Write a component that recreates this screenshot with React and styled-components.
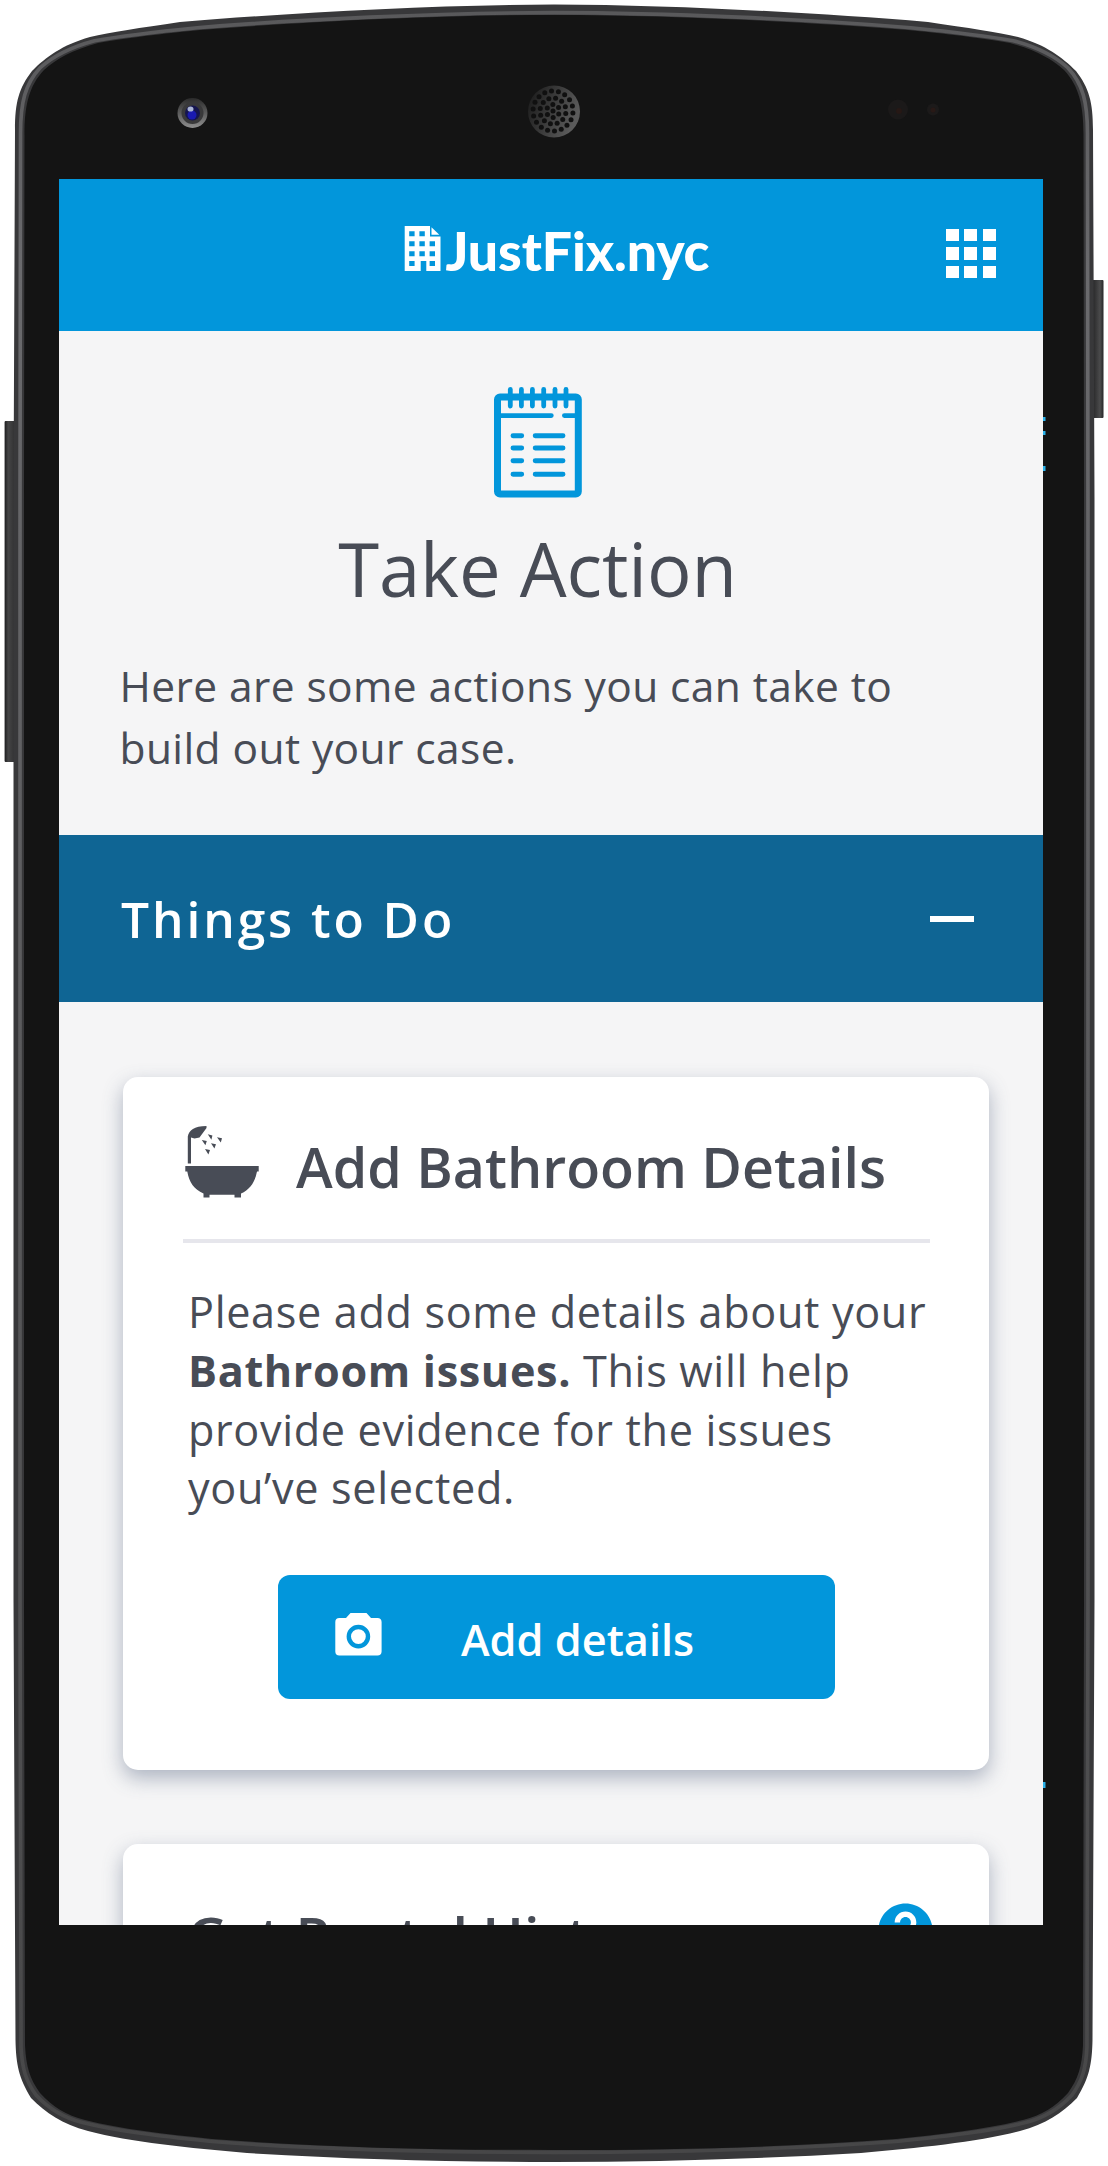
import React from "react";
import styled, { createGlobalStyle } from "styled-components";
import { MdHelp } from "react-icons/md";

const blue = "#0296db";
const ink = "#484c56";

const GlobalStyle = createGlobalStyle`
  * { box-sizing: border-box; }
  body {
    margin: 0;
    background: #fff;
    color: ${ink};
    font-family: "Open Sans", "Noto Sans", sans-serif;
  }
  h1, h2, h3, p { margin: 0; font-weight: 400; }
`;

const Phone = styled.div`
  position: relative;
  width: 1108px;
  height: 2166px;
  padding: 179px 65px 241px 59px;
  overflow: hidden;
`;

const Shell = styled.svg`
  position: absolute;
  inset: 0;
`;

const Screen = styled.main`
  position: relative;
  height: 1746px;
  overflow: hidden;
  background: #f5f5f6;
`;

const TopBar = styled.header`
  display: grid;
  grid-template-columns: 1fr auto 1fr;
  align-items: start;
  height: 152px;
  padding: 47px 47px 0 58px;
  background: ${blue};
`;

const Brand = styled.div`
  grid-column: 2;
  display: flex;
  align-items: flex-start;
  gap: 5px;
  color: #fff;
`;

const BrandName = styled.span`
  font-family: Lato, "Open Sans", sans-serif;
  font-weight: 900;
  font-size: 53.5px;
  line-height: 64px;
  margin-top: -8px;
  letter-spacing: -0.1px;
  white-space: nowrap;
`;

const MenuGrid = styled.button`
  justify-self: end;
  display: grid;
  grid-template-columns: repeat(3, 13px);
  grid-auto-rows: 12.4px;
  gap: 6px 5.7px;
  margin-top: 3px;
  padding: 0;
  border: 0;
  background: none;
`;

const MenuDot = styled.span`
  background: #fff;
`;

const Intro = styled.section`
  display: flex;
  flex-direction: column;
  align-items: center;
  height: 504px;
  padding: 55px 90px 0 63px;
`;

const Title = styled.h1`
  margin-top: 26px;
  font-size: 74.2px;
  line-height: 90px;
  letter-spacing: -0.1px;
  white-space: nowrap;
`;

const Lead = styled.p`
  align-self: stretch;
  margin: 41px 0 0 -2.5px;
  font-size: 42.5px;
  line-height: 62px;
  letter-spacing: 0.4px;
  white-space: nowrap;
`;

const SectionBar = styled.div`
  display: flex;
  align-items: center;
  justify-content: space-between;
  height: 167px;
  padding: 0 69px 0 62px;
  background: #0f6594;
  color: #fff;
`;

const SectionTitle = styled.h2`
  font-size: 49.7px;
  font-weight: 600;
  line-height: 68px;
  letter-spacing: 2.9px;
`;

const Minus = styled.span`
  width: 44px;
  height: 6px;
  background: #fff;
`;

const CardList = styled.div`
  display: flex;
  flex-direction: column;
  gap: 74px;
  padding: 75px 54px 0 64px;
`;

const Card = styled.article`
  flex: none;
  height: 693px;
  padding: 49px 59px 0 60px;
  border-radius: 15px;
  background: #fff;
  box-shadow: 0 8px 20px rgba(72, 88, 120, 0.42);
`;

const CardHead = styled.div`
  display: flex;
  align-items: flex-start;
  justify-content: ${(p) => (p.$spread ? "space-between" : "flex-start")};
  gap: 36px;
  height: ${(p) => (p.$ruled ? 117 : 90)}px;
  padding: ${(p) => (p.$spread ? "3px 0 0 4px" : "0 0 0 2px")};
  border-bottom: ${(p) => (p.$ruled ? "4px solid #e6e6ec" : "0")};
`;

const CardTitle = styled.h3`
  margin-top: 3px;
  font-size: 55.5px;
  font-weight: 600;
  line-height: 76px;
  white-space: nowrap;
`;

const CardText = styled.p`
  margin-top: 40px;
  padding-left: 5px;
  font-size: 43.2px;
  line-height: 58.8px;
  letter-spacing: 0.65px;
  white-space: nowrap;
`;

const ActionButton = styled.button`
  display: flex;
  align-items: center;
  gap: 79px;
  width: 557px;
  height: 124px;
  margin: 57px 0 0 95px;
  padding: 0 0 0 57px;
  border: 0;
  border-radius: 12px;
  background: ${blue};
  color: #fff;
  font: 600 43.3px/60px "Open Sans", "Noto Sans", sans-serif;
`;

const ButtonLabel = styled.span`
  margin-top: 5px;
  white-space: nowrap;
`;

const CameraMark = styled.svg`
  margin-top: -5px;
`;

const HelpIcon = styled(MdHelp)`
  width: 65px;
  height: 65px;
  margin: 2px -8px 0 0;
  color: ${blue};
`;

const speakerHoles = [
  [0, 0, 1],
  [6.5, 0.5, 6],
  [13, 0.2, 12],
  [20, 0.1, 18],
].flatMap(([radius, phase, count]) =>
  Array.from({ length: count }, (_, i) => {
    const angle = phase + (i * 2 * Math.PI) / count;
    return [radius * Math.cos(angle), radius * Math.sin(angle)];
  })
);

const outer =
  "M554 4.5 C430 5 290 13 180 22 C140 28 110 32 90 37 C62 45 46 57 32 71 C19 88 15 102 15 130 L13.5 500 L13.5 1600 L15.5 2040 C16 2065 19 2078 31 2098 C46 2113 62 2124 88 2131 C130 2142 190 2148 247 2153 C350 2159 450 2162 554 2162 C658 2162 758 2159 861 2153 C918 2148 978 2142 1020 2131 C1046 2124 1062 2113 1077 2098 C1089 2078 1092 2065 1092.5 2040 L1094.5 1600 L1094.5 500 L1093 130 C1093 102 1089 88 1076 71 C1062 57 1046 45 1018 37 C998 32 968 28 928 22 C818 13 678 5 554 4.5 Z";
const inner =
  "M554 15 C440 15 300 22 200 30 C150 35 120 39 98 43 C72 50 56 59 44 70 C29 86 24.5 105 24.5 135 L24 500 L24 1600 L25 2045 C26 2067 30 2079 40 2093 C53 2107 66 2115 85 2120 C120 2129 165 2134 212 2139 C318 2147 430 2150 554 2150 C678 2150 790 2147 896 2139 C943 2134 988 2129 1023 2120 C1042 2115 1055 2107 1068 2093 C1078 2079 1082 2067 1083 2045 L1084 1600 L1084 500 L1083.5 135 C1083.5 105 1079 86 1064 70 C1052 59 1036 50 1010 43 C988 39 958 35 908 30 C808 22 668 15 554 15 Z";

function PhoneShell() {
  return (
    <Shell width="1108" height="2166" viewBox="0 0 1108 2166" aria-hidden="true">
      <defs>
        <linearGradient id="keyL" x1="0" x2="1" y1="0" y2="0">
          <stop offset="0" stopColor="#1c1c1d" />
          <stop offset="0.3" stopColor="#454546" />
          <stop offset="1" stopColor="#2c2c2d" />
        </linearGradient>
        <linearGradient id="keyR" x1="0" x2="1" y1="0" y2="0">
          <stop offset="0" stopColor="#242425" />
          <stop offset="0.7" stopColor="#4b4b4c" />
          <stop offset="1" stopColor="#262627" />
        </linearGradient>
        <linearGradient id="rim" x1="0" x2="0" y1="0" y2="1">
          <stop offset="0" stopColor="#59595b" />
          <stop offset="0.12" stopColor="#6a6a6d" />
          <stop offset="0.5" stopColor="#5a5a5c" />
          <stop offset="1" stopColor="#474748" />
        </linearGradient>
        <linearGradient id="speaker" x1="0" x2="1" y1="0" y2="0.4">
          <stop offset="0" stopColor="#171717" />
          <stop offset="1" stopColor="#5b5b5b" />
        </linearGradient>
        <linearGradient id="lens" x1="0" x2="0" y1="0" y2="1">
          <stop offset="0" stopColor="#2b2b2b" />
          <stop offset="1" stopColor="#8e8e8e" />
        </linearGradient>
      </defs>
      <rect x="4.6" y="421" width="12" height="341" rx="1" fill="url(#keyL)" />
      <rect x="1092" y="280" width="11.5" height="138" rx="1" fill="url(#keyR)" />
      <path d={outer} fill="#38383a" />
      <path
        d={inner}
        fill="none"
        stroke="url(#rim)"
        strokeWidth="3.6"
        transform="translate(554 1083) scale(1.0075 1.0022) translate(-554 -1083)"
      />
      <path d={inner} fill="#141414" />
      <circle cx="192.5" cy="113" r="15" fill="url(#lens)" />
      <circle cx="192.5" cy="113" r="11" fill="#39393a" />
      <circle cx="192.5" cy="113" r="7.5" fill="#15154e" />
      <circle cx="192" cy="115" r="4.5" fill="#1a1ab0" />
      <ellipse cx="190.5" cy="109" rx="3" ry="2.6" fill="#a9b4d4" />
      <circle cx="554" cy="111.5" r="26" fill="url(#speaker)" />
      {speakerHoles.map(([x, y], i) => (
        <circle key={i} cx={553 + x} cy={111 + y} r="2.5" fill="#101010" />
      ))}
      <circle cx="898" cy="109.5" r="10" fill="#1b1919" />
      <circle cx="899" cy="111" r="3" fill="#261815" />
      <circle cx="933" cy="109.5" r="6" fill="#1c1a1a" />
      <circle cx="933" cy="110" r="2.5" fill="#281916" />
      <g fill="#2bb2ea">
        <rect x="1043" y="417" width="2.5" height="4" />
        <rect x="1043" y="431" width="2.5" height="4" />
        <rect x="1043" y="466" width="2.5" height="5" />
        <rect x="1043" y="1782" width="2.5" height="6" />
      </g>
    </Shell>
  );
}

function BuildingIcon() {
  return (
    <svg width="37" height="46" viewBox="0 0 37 46" aria-hidden="true">
      <path
        fill="#fff"
        fillRule="evenodd"
        d="M.7 0H26v10.5h10.5V45H22.3V35h-5.6v10H.7ZM5.2 5.2v5h5.4v-5ZM15.4 5.2v5h5.4v-5ZM5.2 15.2v5h5.4v-5ZM15.4 15.2v5h5.4v-5ZM25.6 15.2v5H31v-5ZM5.2 25.2v5h5.4v-5ZM15.4 25.2v5h5.4v-5ZM25.6 25.2v5H31v-5ZM5.2 35v5h5.4v-5ZM25.6 35v5H31v-5Z"
      />
      <path fill="#fff" d="M27.5 1.2V8.8H35.3Z" />
    </svg>
  );
}

function NotepadIcon() {
  return (
    <svg width="88" height="112" viewBox="0 0 88 112" fill="none" stroke={blue} strokeLinecap="round" aria-hidden="true">
      <rect x="3.5" y="11" width="80.8" height="97" rx="2.5" strokeWidth="7" />
      <g strokeWidth="4.8">
        {[16.3, 27.4, 38.4, 49.7, 61, 72].map((x) => (
          <path key={x} d={`M${x} 3.5V20`} />
        ))}
        <path d="M6 29.6H57.3M70.4 29.6H82" />
      </g>
      <g strokeWidth="4.9">
        {[49.7, 62, 74.7, 88.3].map((y) => (
          <path key={y} d={`M19 ${y}H27.7M41.2 ${y}H69`} />
        ))}
      </g>
    </svg>
  );
}

function BathIcon() {
  return (
    <svg width="75" height="74" viewBox="0 0 75 74" fill={ink} aria-hidden="true">
      <path d="M.3 40H73.7V45.5H72C70 56 65 63.5 56 67.5V71.5H49.5V68.8H24.5V71.5H18.5V67.5C9 63.5 4 56 2.3 45.5H.3Z" />
      <path d="M2.8 37.5V10.5C4 4.5 9 0 21.5 0V2L14.5 11.5L9.5 12.5L6 11.5V37.5Z" />
      <path d="M22.8 8.3l4.6 1.2-1 4.2ZM32 11.2l5 1-1.2 4.4ZM16.8 14l5 1-1.4 4.2ZM26 17.2l5 1-1.6 4.2ZM20 23l5 1-1.6 4.4Z" />
    </svg>
  );
}

function CameraIcon() {
  return (
    <CameraMark width="47" height="43" viewBox="0 0 47 43" aria-hidden="true">
      <path
        fill="#fff"
        d="M15.5 0H31.5L36 5H42.5C45 5 46.6 6.6 46.6 9V38.5C46.6 41 45 42.4 42.5 42.4H4.3C1.8 42.4.3 41 .3 38.5V9C.3 6.6 1.8 5 4.3 5H11Z"
      />
      <circle cx="23.4" cy="23.6" r="9.6" fill="none" stroke={blue} strokeWidth="4.4" />
    </CameraMark>
  );
}

export default function App() {
  return (
    <>
      <GlobalStyle />
      <Phone>
        <PhoneShell />
        <Screen>
          <TopBar>
            <Brand>
              <BuildingIcon />
              <BrandName>JustFix.nyc</BrandName>
            </Brand>
            <MenuGrid aria-label="Menu">
              {Array.from({ length: 9 }, (_, i) => (
                <MenuDot key={i} />
              ))}
            </MenuGrid>
          </TopBar>
          <Intro>
            <NotepadIcon />
            <Title>Take Action</Title>
            <Lead>
              Here are some actions you can take to
              <br />
              build out your case.
            </Lead>
          </Intro>
          <SectionBar>
            <SectionTitle>Things to Do</SectionTitle>
            <Minus />
          </SectionBar>
          <CardList>
            <Card>
              <CardHead $ruled>
                <BathIcon />
                <CardTitle>Add Bathroom Details</CardTitle>
              </CardHead>
              <CardText>
                Please add some details about your
                <br />
                <b>Bathroom issues.</b> This will help
                <br />
                provide evidence for the issues
                <br />
                you’ve selected.
              </CardText>
              <ActionButton>
                <CameraIcon />
                <ButtonLabel>Add details</ButtonLabel>
              </ActionButton>
            </Card>
            <Card>
              <CardHead $spread>
                <CardTitle>Get Rental History</CardTitle>
                <HelpIcon aria-label="Help" />
              </CardHead>
            </Card>
          </CardList>
        </Screen>
      </Phone>
    </>
  );
}
